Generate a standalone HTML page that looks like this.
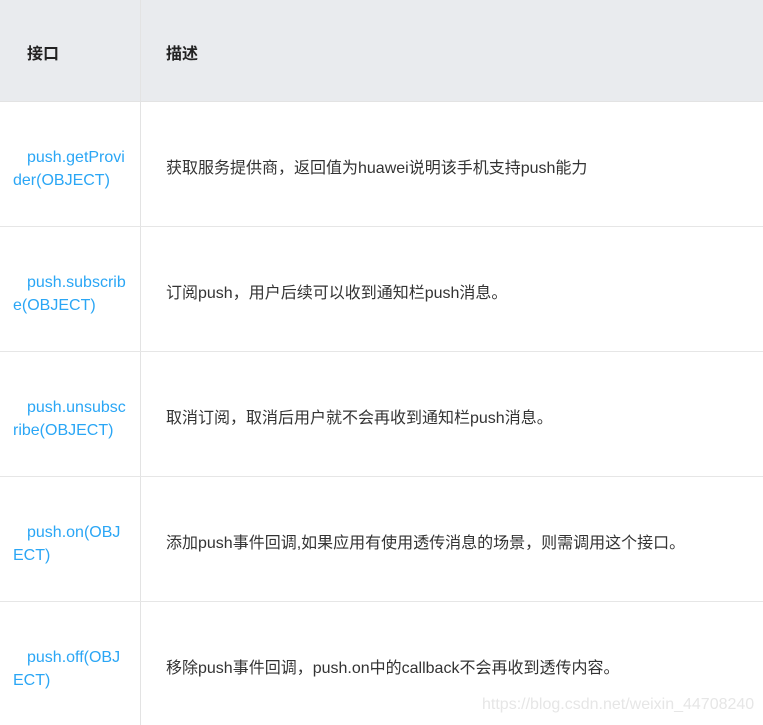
<!DOCTYPE html><html><head><meta charset="utf-8"><style>
body{margin:0;width:763px;height:725px;overflow:hidden;background:#fff;font-family:"Liberation Sans","Noto Sans CJK SC",sans-serif;font-size:16px;color:#333}
.hd{position:absolute;left:0;top:0;width:763px;height:101px;background:#e9ebee;border-bottom:1px solid #e3e3e3}
.v{position:absolute;left:140px;top:0;width:1px;height:725px;background:#e3e3e3}
.h{position:absolute;left:0;width:763px;height:1px;background:#e6e6e6}
.t{position:absolute;line-height:23px;white-space:nowrap}
.l{color:#2aa6f5;left:13px}
.l span{padding-left:14px}
.b{font-weight:bold;color:#222;font-size:16px}
.wm{position:absolute;left:482px;top:696px;color:#e6e6e6;font-size:16px}
</style></head><body>
<div class="hd"></div><div class="v"></div>
<div class="h" style="top:226px"></div><div class="h" style="top:351px"></div><div class="h" style="top:476px"></div><div class="h" style="top:601px"></div>
<div class="t b" style="left:27px;top:43px">接口</div>
<div class="t b" style="left:166px;top:43px">描述</div>
<div class="t l" style="top:146px"><span></span>push.getProvi<br>der(OBJECT)</div>
<div class="t" style="left:166px;top:157px">获取服务提供商，返回值为huawei说明该手机支持push能力</div>
<div class="t l" style="top:271px"><span></span>push.subscrib<br>e(OBJECT)</div>
<div class="t" style="left:166px;top:282px">订阅push，用户后续可以收到通知栏push消息。</div>
<div class="t l" style="top:396px"><span></span>push.unsubsc<br>ribe(OBJECT)</div>
<div class="t" style="left:166px;top:407px">取消订阅，取消后用户就不会再收到通知栏push消息。</div>
<div class="t l" style="top:521px"><span></span>push.on(OBJ<br>ECT)</div>
<div class="t" style="left:166px;top:532px">添加push事件回调,如果应用有使用透传消息的场景，则需调用这个接口。</div>
<div class="t l" style="top:646px"><span></span>push.off(OBJ<br>ECT)</div>
<div class="t" style="left:166px;top:657px">移除push事件回调，push.on中的callback不会再收到透传内容。</div>
<div class="wm">https://blog.csdn.net/weixin_44708240</div>
</body></html>
